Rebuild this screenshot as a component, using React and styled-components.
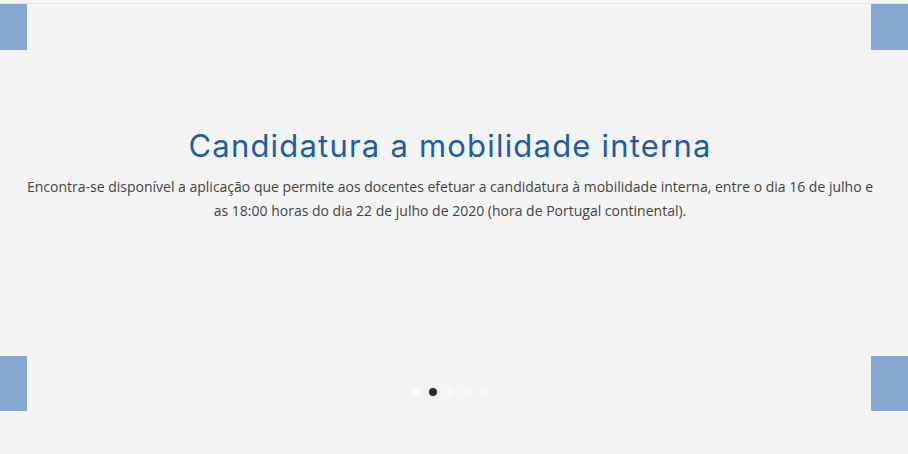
import React from 'react';
import styled, { createGlobalStyle } from 'styled-components';

const GlobalStyle = createGlobalStyle`
  html, body {
    margin: 0;
    padding: 0;
    background: #f4f4f4;
  }
  body {
    font-family: "Open Sans", "Liberation Sans", sans-serif;
  }
`;

const Page = styled.div`
  width: 908px;
  height: 454px;
  padding-top: 3px;
  background: #f4f4f4;
  box-sizing: border-box;
  overflow: hidden;
`;

const Slider = styled.div`
  position: relative;
  height: 408px;
  border-top: 1px solid #e3e3e3;
  display: flex;
  flex-direction: column;
  align-items: center;
  padding-right: 8px;
  box-sizing: border-box;
`;

const Corner = styled.div`
  position: absolute;
  background: #86a7cf;
  width: ${p => (p.right ? '37px' : '27px')};
  height: ${p => (p.bottom ? '55px' : '46px')};
  ${p => (p.right ? 'right: 0;' : 'left: 0;')}
  ${p => (p.bottom ? 'top: 352px;' : 'top: 0;')}
`;

const Slide = styled.div`
  width: 860px;
  padding-top: 122px;
  text-align: center;
`;

const Title = styled.h2`
  margin: 0;
  font-family: "Inter", "Liberation Sans", sans-serif;
  font-weight: 400;
  font-size: 31px;
  line-height: 40px;
  color: #1b5ea6;
  letter-spacing: 1.2px;
`;

const Text = styled.p`
  margin: 9px 0 0;
  font-size: 14px;
  line-height: 24px;
  color: #444;
`;

const Dots = styled.div`
  margin-top: auto;
  margin-bottom: 15px;
  display: flex;
  gap: 9px;
  align-items: center;
`;

const Dot = styled.span`
  width: 8px;
  height: 8px;
  border-radius: 50%;
  background: ${p => (p.active ? '#2b2b2b' : '#f9f9f9')};
`;

const slides = [0, 1, 2, 3, 4];

export default function App() {
  return (
    <Page>
      <GlobalStyle />
      <Slider>
        <Corner />
        <Corner right />
        <Corner bottom />
        <Corner right bottom />
        <Slide>
          <Title>Candidatura a mobilidade interna</Title>
          <Text>
            Encontra-se disponível a aplicação que permite aos docentes efetuar a candidatura à mobilidade interna, entre o dia 16 de julho e as 18:00 horas do dia 22 de julho de 2020 (hora de Portugal continental).
          </Text>
        </Slide>
        <Dots>
          {slides.map(i => (
            <Dot key={i} active={i === 1} />
          ))}
        </Dots>
      </Slider>
    </Page>
  );
}
